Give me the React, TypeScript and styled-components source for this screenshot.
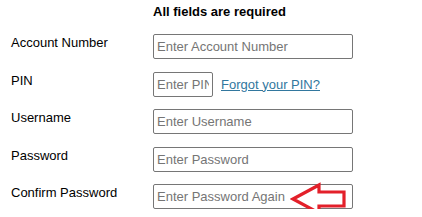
import React, { FC } from 'react';
import styled, { createGlobalStyle } from 'styled-components';

const GlobalStyle = createGlobalStyle`
  body {
    margin: 0;
    background: #ffffff;
    font-family: 'Liberation Sans', Arial, sans-serif;
    color: #000000;
  }
`;

const Form = styled.form`
  display: grid;
  grid-template-columns: 142px auto;
  row-gap: 12.5px;
  padding: 4px 0 0 11px;
  align-items: start;
`;

const Heading = styled.div`
  grid-column: 2;
  font-size: 13px;
  font-weight: bold;
  line-height: 15px;
  margin-bottom: 2.5px;
`;

const Label = styled.label`
  font-size: 13px;
  line-height: 15px;
  padding-top: 1px;
`;

const Field = styled.div`
  position: relative;
  display: flex;
  align-items: center;
  gap: 8px;
`;

const Input = styled.input<{ narrow?: boolean }>`
  box-sizing: border-box;
  width: ${({ narrow }) => (narrow ? '60px' : '200px')};
  height: 25px;
  margin: 0;
  padding: 1px 3px;
  border: 1px solid #767676;
  border-radius: 2px;
  font-family: 'Liberation Sans', Arial, sans-serif;
  font-size: 13px;
  color: #000000;
  background: #ffffff;

  ::placeholder {
    color: #757575;
  }
`;

const Link = styled.a`
  font-size: 13px;
  color: #32779e;
  text-decoration: underline;
`;

// red pointer drawn over the confirm field
const Arrow = styled.svg`
  position: absolute;
  left: 137px;
  top: -3px;
`;

const ROWS = [
  { id: 'account', label: 'Account Number', placeholder: 'Enter Account Number' },
  { id: 'pin', label: 'PIN', placeholder: 'Enter PIN' },
  { id: 'username', label: 'Username', placeholder: 'Enter Username' },
  { id: 'password', label: 'Password', placeholder: 'Enter Password' },
  { id: 'confirm', label: 'Confirm Password', placeholder: 'Enter Password Again' },
];

const App: FC = () => (
  <>
    <GlobalStyle />
    <Form onSubmit={e => e.preventDefault()}>
      <Heading>All fields are required</Heading>
      {ROWS.map(row => (
        <React.Fragment key={row.id}>
          <Label htmlFor={row.id}>{row.label}</Label>
          <Field>
            <Input
              id={row.id}
              narrow={row.id === 'pin'}
              type={row.id === 'password' || row.id === 'confirm' || row.id === 'pin' ? 'password' : 'text'}
              placeholder={row.placeholder}
            />
            {row.id === 'pin' && <Link href="#">Forgot your PIN?</Link>}
            {row.id === 'confirm' && (
              <Arrow width="58" height="34" viewBox="0 0 58 34">
                <polygon
                  points="3,18 29,4 29,11 54,11 54,25 29,25 29,32"
                  fill="#ffffff"
                  stroke="#e3202a"
                  strokeWidth="3.2"
                  strokeLinejoin="miter"
                />
              </Arrow>
            )}
          </Field>
        </React.Fragment>
      ))}
    </Form>
  </>
);

export default App;
